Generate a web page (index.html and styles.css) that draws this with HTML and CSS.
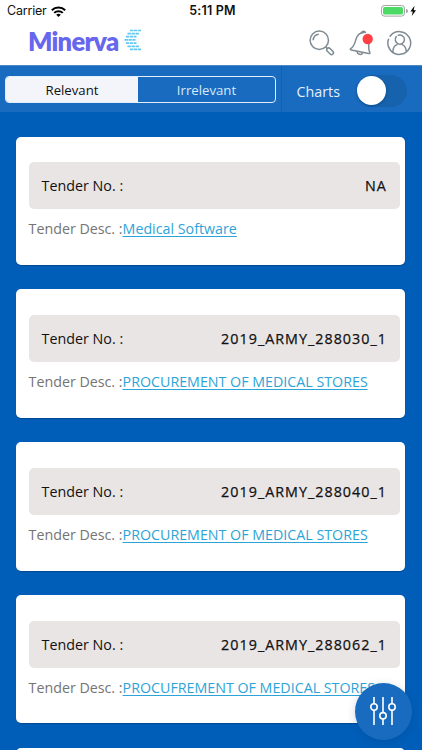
FILE: index.html
```html
<!DOCTYPE html>
<html lang="en">
<head>
<meta charset="utf-8">
<title>Minerva</title>
<link rel="stylesheet" href="styles.css">
</head>
<body>
<div class="screen">
  <header class="top">
    <div class="status">
      <div class="carrier"><span>Carrier</span>
        <svg width="15" height="11" viewBox="0 0 15 11"><g fill="none" stroke="#000" stroke-width="2"><path d="M.8 4.2a9.6 9.6 0 0 1 13.4 0"/><path d="M3.2 6.9a6.1 6.1 0 0 1 8.6 0"/></g><path d="M7.5 11 5.2 8.7a3.4 3.4 0 0 1 4.6 0z"/></svg>
      </div>
      <div class="clock">5:11 PM</div>
      <svg class="battery" width="37" height="12" viewBox="0 0 37 12"><rect x=".5" y=".5" width="23" height="10.6" rx="2.8" fill="#fff" stroke="#a3a3a3"/><rect x="2" y="2" width="20" height="7.6" rx="1.5" fill="#4cd964"/><path d="M25 4a2 2 0 0 1 0 4z" fill="#a3a3a3"/><path d="M33.6.8 29.4 6.6h2.4l-1 4.4 4.2-5.8h-2.4z"/></svg>
    </div>
    <div class="brandbar">
      <div class="brand"><span class="brand-name">Minerva</span>
        <svg class="brand-mark" width="18" height="22" viewBox="0 0 18 22"><g fill="none" stroke="#62c8f2" stroke-width="1.7" stroke-dasharray="3.4 .6"><path d="M6 1.5h11"/><path d="M3.5 4.6h11.5"/><path d="M2 7.7h10.5"/><path d="M.5 10.9h11"/><path d="M2 14.1h10.5"/><path d="M3.5 17.3h11.5"/><path d="M6 20.4h11"/></g></svg>
      </div>
      <div class="actions">
        <svg width="26" height="26" viewBox="0 0 26 26" fill="none" stroke="#7f8b93" stroke-width="1.5"><circle cx="10.3" cy="10.3" r="9.2"/><path d="M4.2 10.2a6 6 0 0 1 5.6-6M16.6 16.9l1.8 1.7"/><rect x="-1.9" y="-3.9" width="3.8" height="7.8" rx="1.9" transform="translate(21.1 21.3) rotate(-45)"/></svg>
        <svg width="24" height="26" viewBox="0 0 24 26" fill="none" stroke="#7f8b93" stroke-width="1.5" stroke-linejoin="round" stroke-linecap="round"><path d="M19.8 13.5c-.3 4.2-.2 6.6 1 8.8.5 1-.2 1.5-1.2 1.2L2.3 20.1c-1.4-.3-1.3-1.2-.3-1.8 3-1.7 3.7-4.5 4.8-8.5 1.2-4.5 3.8-7.4 8.3-7.3"/><path d="M12.3 3c.6-2.2 3.5-2.4 4.2-.4M8 21.5c.2 3 4.3 4.2 5.7 1.2"/><circle cx="18.7" cy="9" r="5.2" fill="#ff4145" stroke="none"/></svg>
        <svg width="25" height="26" viewBox="0 0 25 26" fill="none" stroke="#7f8b93" stroke-width="1.5" stroke-linecap="round"><path d="M3.1 6.2a11.4 11.4 0 1 1-1.6 3M5.9 21.7c.1-4.1 1.6-6.2 4.2-7.1M19.2 21.7c-.1-4.1-1.6-6.2-4.2-7.1"/><path d="M9.3 6.6a4.6 4.6 0 1 0 2-1.4"/></svg>
      </div>
    </div>
  </header>
  <nav class="toolbar">
    <div class="tabs-wrap"><div class="tabs"><div class="tab active"><span>Relevant</span></div><div class="tab"><span>Irrelevant</span></div></div></div>
    <div class="charts"><span>Charts</span><div class="switch"><div class="knob"></div></div></div>
  </nav>
  <main class="list">
    <article class="card"><div class="number"><span class="label">Tender No. :</span><span class="value">NA</span></div><p class="desc"><span>Tender Desc. :</span><a>Medical Software</a></p></article>
    <article class="card"><div class="number"><span class="label">Tender No. :</span><span class="value">2019_ARMY_288030_1</span></div><p class="desc"><span>Tender Desc. :</span><a>PROCUREMENT OF MEDICAL STORES</a></p></article>
    <article class="card"><div class="number"><span class="label">Tender No. :</span><span class="value">2019_ARMY_288040_1</span></div><p class="desc"><span>Tender Desc. :</span><a>PROCUREMENT OF MEDICAL STORES</a></p></article>
    <article class="card"><div class="number"><span class="label">Tender No. :</span><span class="value">2019_ARMY_288062_1</span></div><p class="desc"><span>Tender Desc. :</span><a>PROCUFREMENT OF MEDICAL STORES</a></p></article>
    <article class="card"></article>
  </main>
  <div class="fab"><svg width="28" height="30" viewBox="0 0 28 30" fill="none" stroke="#fff" stroke-width="1.6"><path d="M5 1v6.8M5 14.2V29M14 1v15.6M14 23v6M23 1v6.8M23 14.2V29"/><circle cx="5" cy="11" r="3.2"/><circle cx="14" cy="19.8" r="3.2"/><circle cx="23" cy="11" r="3.2"/></svg></div>
</div>
</body>
</html>
```
FILE: styles.css
```css
* { box-sizing: border-box; }
body { margin: 0; font-family: "Open Sans", "Noto Sans", sans-serif; }
.screen { position: relative; width: 422px; height: 750px; overflow: hidden; background: #005eb8; }
.top { height: 65.4px; background: #fff; }
.status { height: 22px; padding: 0 4px 0 7px; display: grid; grid-template-columns: 1fr auto 1fr; align-items: center; font: 12.5px/22px Inter, sans-serif; color: #111; }
.carrier { display: flex; align-items: center; gap: 4px; letter-spacing: -.2px; }
.clock { font-weight: 600; letter-spacing: .2px; }
.battery { justify-self: end; }
.brandbar { height: 43px; padding: 0 10px 0 28px; display: flex; justify-content: space-between; }
.brand { display: flex; gap: 6.5px; padding-top: 7px; }
.brand-name { width: 89px; font: 800 25.5px/24px Lato, sans-serif; letter-spacing: -.75px; color: #6666ee; white-space: nowrap; }
.actions { display: flex; gap: 14px; padding-top: 8px; }
.toolbar { height: 46.4px; display: flex; background: #196bbf; border-top: 1px solid #4c88c7; }
.tabs-wrap { width: 282px; padding: 10px 5px 0 5px; border-right: 1px solid #1260b0; }
.tabs { height: 27px; display: flex; border: 1px solid #e4eef9; border-radius: 4px; overflow: hidden; }
.tab { flex: 1; color: #d7e8fa; text-align: center; font-size: 13.2px; line-height: 26px; }
.tab.active { flex: 0 0 132px; background: #f3f5fa; color: #111; }
.charts { flex: 1; display: flex; align-items: center; padding: 4px 15px 0 14.5px; justify-content: space-between; color: #e5f0fb; font-size: 14.3px; }
.switch { width: 50px; height: 32px; border-radius: 16px; background: #1762ad; display: flex; align-items: center; }
.knob { width: 29px; height: 29px; margin-top: -1px; border-radius: 50%; background: #fff; box-shadow: 0 1px 3px #003a7699; }
.list { padding: 24.9px 16.6px 0 16.4px; display: flex; flex-direction: column; gap: 24.4px; }
.card { height: 128.4px; flex-shrink: 0; padding: 25.7px 5.5px 0 12.2px; border-radius: 5px; background: #fff; box-shadow: 0 1px 1px #00356a80; }
.number { height: 47px; border-radius: 5px; background: #e9e5e4; display: flex; align-items: center; justify-content: space-between; padding: 0 14px 0 13px; color: #111; font-size: 14.3px; }
.value { font-weight: 500; letter-spacing: 1.02px; margin-right: -1px; -webkit-text-stroke: .25px #111; }
.desc { margin: 10px 0 0; font-size: 14.25px; line-height: 20px; color: #747474; white-space: nowrap; }
.desc a { color: #2da4d7; text-decoration: underline; text-decoration-thickness: 1px; text-underline-offset: 1.5px; }
.fab { position: absolute; left: 354.5px; top: 682.5px; width: 57px; height: 57px; border-radius: 50%; background: #196bbf; display: flex; align-items: center; justify-content: center; box-shadow: 0 2px 8px #00336630; }
```
